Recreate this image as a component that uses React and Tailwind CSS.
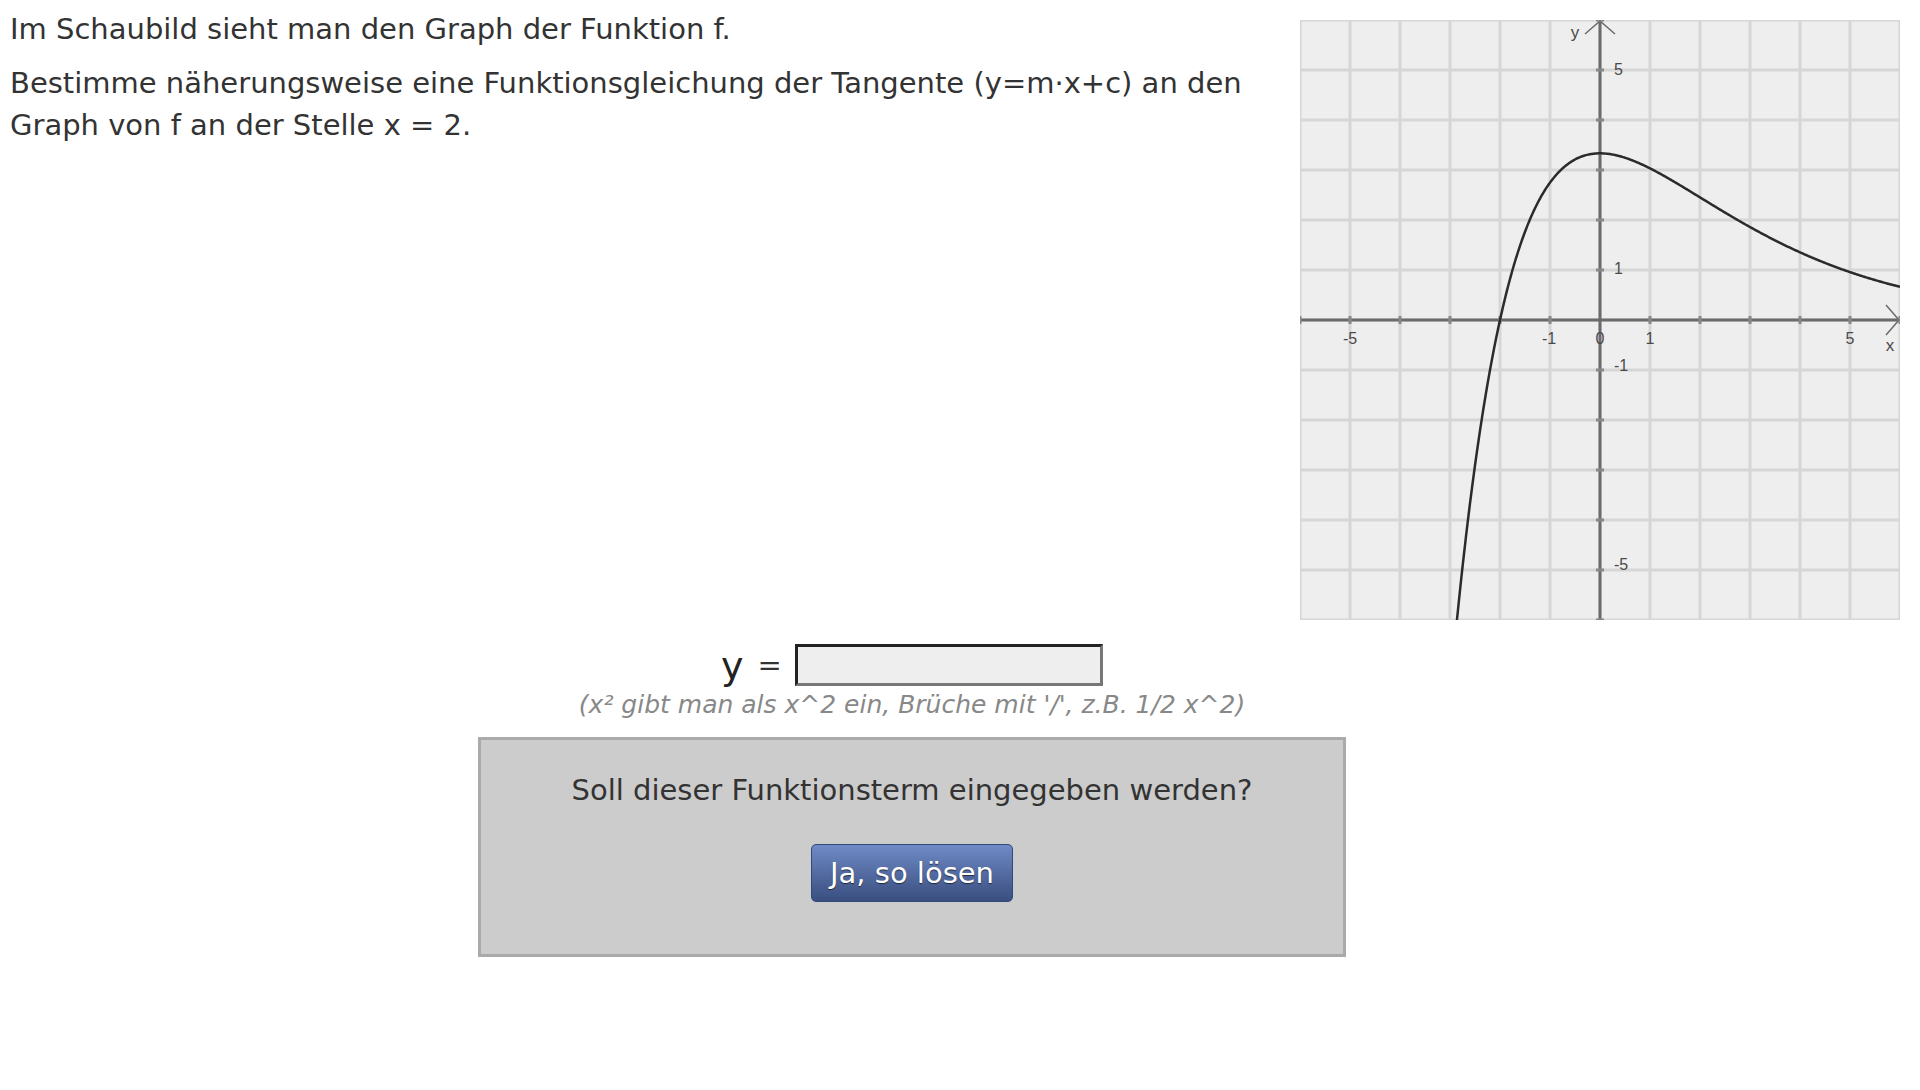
import React from "react";

const UNIT = 50;
const ORIGIN = 300;

// f(x) = 5/3 (x+2) e^(-x/2)
function curvePath() {
    const pts = [];
    for (let x = -2.92; x <= 6.01; x += 0.02) {
        const y = (5 / 3) * (x + 2) * Math.exp(-x / 2);
        pts.push(`${(ORIGIN + x * UNIT).toFixed(2)},${(ORIGIN - y * UNIT).toFixed(2)}`);
    }
    return "M" + pts.join(" L");
}

function Graph() {
    const lines = [];
    for (let i = 0; i <= 12; i++) lines.push(i * UNIT);
    const ticks = [];
    for (let i = -6; i <= 6; i++) if (i !== 0) ticks.push(i);

    return (
        <svg width="600" height="600" viewBox="0 0 600 600" className="block">
            <rect x="0" y="0" width="600" height="600" fill="#eeeeee" />
            {lines.map((p) => (
                <g key={p}>
                    <line x1={p} y1="0" x2={p} y2="600" stroke="#d6d6d6" strokeWidth="3" />
                    <line x1="0" y1={p} x2="600" y2={p} stroke="#d6d6d6" strokeWidth="3" />
                </g>
            ))}
            {/* axes */}
            <line x1="0" y1="300" x2="600" y2="300" stroke="#6a6a6a" strokeWidth="3" />
            <line x1="300" y1="0" x2="300" y2="600" stroke="#6a6a6a" strokeWidth="3" />
            <polyline points="586,285 599,300 586,315" fill="none" stroke="#6a6a6a" strokeWidth="1.5" />
            <polyline points="285,14 300,1 315,14" fill="none" stroke="#6a6a6a" strokeWidth="1.5" />
            {ticks.map((t) => (
                <g key={t}>
                    <line x1={ORIGIN + t * UNIT} y1="296" x2={ORIGIN + t * UNIT} y2="304" stroke="#888" strokeWidth="3" />
                    <line x1="296" y1={ORIGIN - t * UNIT} x2="304" y2={ORIGIN - t * UNIT} stroke="#888" strokeWidth="3" />
                </g>
            ))}
            <g fontFamily="'Liberation Sans', Arial, sans-serif" fontSize="16" fill="#4a4a4a">
                <text x="50" y="324" textAnchor="middle">-5</text>
                <text x="249" y="324" textAnchor="middle">-1</text>
                <text x="300" y="324" textAnchor="middle">0</text>
                <text x="350" y="324" textAnchor="middle">1</text>
                <text x="550" y="324" textAnchor="middle">5</text>
                <text x="590" y="331" textAnchor="middle" fontSize="17">x</text>
                <text x="275" y="18" textAnchor="middle" fontSize="17">y</text>
                <text x="314" y="55">5</text>
                <text x="314" y="254">1</text>
                <text x="314" y="351">-1</text>
                <text x="314" y="550">-5</text>
            </g>
            <path d={curvePath()} fill="none" stroke="#2b2b2b" strokeWidth="2.5" />
        </svg>
    );
}

export default function App() {
    return (
        <div className="w-[1920px] min-h-[1090px] bg-white text-[#333] font-['DejaVu_Sans',sans-serif]">
            <div className="flex justify-between">
                <div className="w-[1250px] pl-[10px] pt-[8px] text-[29px] leading-[42px]">
                    <p>Im Schaubild sieht man den Graph der Funktion f.</p>
                    <p className="mt-[12px]">
                        Bestimme näherungsweise eine Funktionsgleichung der Tangente (y=m·x+c) an den Graph von f an der Stelle x = 2.
                    </p>
                </div>
                <div className="mt-[20px] mr-[20px]">
                    <Graph />
                </div>
            </div>

            <div className="w-[1824px] flex flex-col items-center">
                <div className="mt-[24px] flex items-center h-[42px]">
                    <span className="text-[38px] leading-[38px] text-[#222] translate-y-[1px]">y</span>
                    <span className="text-[29px] leading-[42px] ml-[14px] mr-[13px]">=</span>
                    <input
                        type="text"
                        className="w-[308px] h-[42px] bg-[#eeeeee] border-[3px] border-t-[#222] border-l-[#222] border-b-[#777] border-r-[#777] outline-none"
                    />
                </div>
                <p className="mt-[2px] text-[25px] leading-[34px] italic text-[#888]">
                    (x² gibt man als x^2 ein, Brüche mit '/', z.B. 1/2 x^2)
                </p>
                <div className="mt-[15px] w-[868px] h-[220px] bg-[#cccccc] border-[3px] border-[#aaaaaa] flex flex-col items-center pt-[29px]">
                    <p className="text-[29px] leading-[42px] text-[#333]">Soll dieser Funktionsterm eingegeben werden?</p>
                    <button className="mt-[33px] h-[58px] px-[18px] rounded-[5px] border border-[#34487a] bg-gradient-to-b from-[#6f8bc6] to-[#3a4e80] text-white text-[29px] leading-[42px] [text-shadow:0_1px_1px_rgba(0,0,0,0.6)]">
                        Ja, so lösen
                    </button>
                </div>
            </div>
        </div>
    );
}
